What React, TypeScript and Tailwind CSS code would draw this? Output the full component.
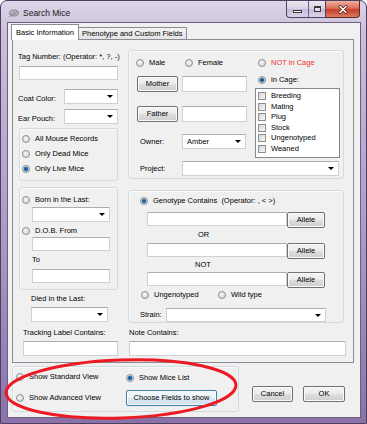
import React from 'react';

type RadioProps = { checked?: boolean; label: string; className?: string; red?: boolean };

const Radio = ({ checked, label, className = 'h-[12px]', red }: RadioProps) => (
  <div className={`flex items-center ${className}`}>
    <span className="w-[8px] h-[8px] shrink-0 rounded-full border border-[#8e8f8f] bg-[radial-gradient(circle_at_40%_40%,#f7f7f7,#cdcdcd)] flex items-center justify-center">
      {checked && <span className="w-[4px] h-[4px] rounded-full bg-[#1a5a9c] shadow-[0_0_0_0.5px_#6fb6e6]" />}
    </span>
    <span className={`ml-[5px] whitespace-pre leading-[10px] ${red ? 'text-[#f0302c]' : ''}`}>{label}</span>
  </div>
);

const Check = ({ label }: { label: string }) => (
  <div className="flex items-center h-[10.5px]">
    <span className="w-[8px] h-[8px] shrink-0 border border-[#8f8f8f] bg-gradient-to-br from-[#d6d6d6] to-[#f8f8f8]" />
    <span className="ml-[5px] leading-[10px]">{label}</span>
  </div>
);

const TextBox = ({ className = '' }: { className?: string }) => (
  <div className={`bg-white border border-[#cdd0d5] border-t-[#abadb3] ${className}`} />
);

const Combo = ({ className = '', value = '' }: { className?: string; value?: string }) => (
  <div
    className={`bg-white border border-[#cdd0d5] border-t-[#abadb3] flex items-center justify-between pl-[4px] pr-[4px] ${className}`}
  >
    <span className="leading-[10px]">{value}</span>
    <span className="w-0 h-0 border-x-[3px] border-x-transparent border-t-[3px] border-t-black" />
  </div>
);

const Btn = ({ label, className = '', focus }: { label: string; className?: string; focus?: boolean }) => (
  <div
    className={`h-[16px] rounded-[2px] border flex items-center justify-center leading-[10px] shadow-[inset_0_0_0_1px_#fbfbfb] ${
      focus
        ? 'border-[#3c7fb1] bg-[linear-gradient(#f4f9fc_0%,#eaf3f9_50%,#dbe9f3_51%,#cfe1ee_100%)]'
        : 'border-[#707070] bg-[linear-gradient(#f2f2f2_0%,#ebebeb_50%,#dddddd_51%,#cfcfcf_100%)]'
    } ${className}`}
  >
    {label}
  </div>
);

const Group = ({ className = '', children }: { className?: string; children?: React.ReactNode }) => (
  <div className={`border border-[#d2dbe1] rounded-[3px] shadow-[inset_1px_1px_0_#fafafa] ${className}`}>{children}</div>
);

const App = () => {
  return (
    <div className="relative w-[367px] h-[424px] overflow-hidden rounded-t-[7px] border border-[#4d3f60] bg-[linear-gradient(180deg,#ddd5e7_0%,#cbbedb_8%,#ad99c6_55%,#8a72a9_100%)] font-['Liberation_Sans',Arial,sans-serif] text-[7.5px] text-black">
      {/* title bar */}
      <div className="flex items-start h-[21px]">
        <svg className="ml-[7px] mt-[7px]" width="11" height="10" viewBox="0 0 11 10">
          <ellipse cx="6" cy="5" rx="4.5" ry="3" fill="#b9b4bd" stroke="#7d7784" strokeWidth="0.8" />
          <path d="M1 9 L5 5 M3 8.5 L7 4 M6 7 L9.5 3" stroke="#8a8590" strokeWidth="0.8" />
        </svg>
        <span className="ml-[4px] mt-[7px] text-[8.5px] leading-[10px] text-[#1a1a1a]">Search Mice</span>
        <div className="ml-auto mr-[6px] flex h-[17px]">
          <div className="flex w-[40px] border border-t-0 border-[#4f4163] rounded-bl-[4px] overflow-hidden bg-[linear-gradient(#ece7f2_0%,#d9d0e4_50%,#c6b8d8_51%,#dcd2e8_100%)]">
            <div className="w-[22px] border-r border-[#6e5f84] flex items-center justify-center">
              <span className="mt-[5px] w-[9px] h-[3px] bg-white border border-[#3a3a3a]" />
            </div>
            <div className="flex-1 flex items-center justify-center">
              <span className="w-[7px] h-[6px] border border-[#3a3a3a] border-t-2 bg-white/40" />
            </div>
          </div>
          <div className="w-[34px] border border-t-0 border-l-0 border-[#5e2b22] rounded-br-[4px] bg-[linear-gradient(#eeb1a3_0%,#dc6d55_45%,#c6402a_55%,#dc7b60_100%)] flex items-center justify-center">
            <svg width="10" height="9" viewBox="0 0 10 9">
              <path d="M2 1.5 L8 7.5 M8 1.5 L2 7.5" stroke="#4a2018" strokeWidth="3" strokeLinecap="round" />
              <path d="M2 1.5 L8 7.5 M8 1.5 L2 7.5" stroke="#ffffff" strokeWidth="1.6" strokeLinecap="round" />
            </svg>
          </div>
        </div>
      </div>

      {/* client area */}
      <div className="ml-[6px] w-[354px] h-[396px] border border-[#6c5f7f] bg-[#f0f0f0] flex flex-col">
        {/* tabs */}
        <div className="mt-[1px] h-[16px] flex items-end pl-[3px]">
          <div className="relative z-10 w-[68px] h-[16px] border border-b-0 border-[#898c95] bg-white pl-[4px] pt-[3px] leading-[10px]">
            Basic Information
          </div>
          <div className="w-[108px] h-[13px] border border-l-0 border-b-0 border-[#898c95] bg-[linear-gradient(#f3f3f3,#e2e2e2)] pl-[3px] pt-[1px] leading-[10px]">
            Phenotype and Custom Fields
          </div>
        </div>

        {/* tab page */}
        <div className="-mt-px ml-[4px] w-[342px] h-[324px] border border-[#898c95] bg-[#f0f0f0] pl-[6px] flex flex-col">
          <div className="flex items-start">
            {/* left column */}
            <div className="w-[99px] flex flex-col">
              <div className="mt-[12px] h-[10px] leading-[10px] whitespace-pre -ml-px">Tag Number: (Operator: *, ?, -)</div>
              <TextBox className="mt-[4px] w-full h-[14px]" />
              <div className="mt-[9px] flex items-end h-[15px]">
                <span className="flex-1 leading-[10px] -ml-px">Coat Color:</span>
                <Combo className="w-[54px] h-[15px]" />
              </div>
              <div className="mt-[5px] flex items-end h-[15px]">
                <span className="flex-1 leading-[10px] -ml-px">Ear Pouch:</span>
                <Combo className="w-[54px] h-[15px]" />
              </div>
              <Group className="mt-[4px] h-[53px] w-full pt-[2px] pl-[2px]">
                <Radio label="All Mouse Records" className="h-[15px]" />
                <Radio label="Only Dead Mice" className="h-[15px]" />
                <Radio label="Only Live Mice" checked className="h-[15px]" />
              </Group>
              <Group className="mt-[6px] h-[103px] w-full pt-[6px] pl-[2px] flex flex-col">
                <Radio label="Born in the Last:" />
                <Combo className="mt-[1px] ml-[10px] w-[78px] h-[15px]" />
                <Radio label="D.O.B. From" className="mt-[3px] h-[12px]" />
                <TextBox className="ml-[10px] w-[78px] h-[14px]" />
                <div className="ml-[10px] mt-[4px] h-[10px] leading-[10px]">To</div>
                <TextBox className="mt-[4px] ml-[10px] w-[78px] h-[14px]" />
              </Group>
              <div className="mt-[4px] ml-[12px] h-[10px] leading-[10px]">Died in the Last:</div>
              <Combo className="mt-[3px] ml-[12px] w-[77px] h-[15px]" />
            </div>

            {/* right column */}
            <div className="ml-[10px] w-[216px] flex flex-col">
              <Group className="mt-[10px] h-[129px] w-full flex flex-col">
                <div className="flex items-start">
                  <div className="w-[122px] flex flex-col">
                    <div className="mt-[6px] h-[12px] flex items-center pl-[7px]">
                      <Radio label="Male" className="h-[12px] w-[49px]" />
                      <Radio label="Female" />
                    </div>
                    <div className="mt-[7px] h-[16px] flex">
                      <Btn label="Mother" className="ml-[8px] w-[41px]" />
                      <TextBox className="ml-[4px] w-[65px] h-[16px]" />
                    </div>
                    <div className="mt-[14px] h-[16px] flex">
                      <Btn label="Father" className="ml-[8px] w-[41px]" />
                      <TextBox className="ml-[4px] w-[65px] h-[16px]" />
                    </div>
                    <div className="mt-[12px] h-[15px] flex items-center">
                      <span className="ml-[11px] w-[42px] leading-[10px]">Owner:</span>
                      <Combo value="Amber" className="w-[64px] h-[15px]" />
                    </div>
                  </div>
                  <div className="ml-[4px] w-[85px] flex flex-col">
                    <Radio label="NOT in Cage" red className="mt-[6px] h-[12px] pl-[3px]" />
                    <Radio label="in Cage:" checked className="mt-[5px] h-[12px] pl-[3px]" />
                    <div className="mt-[2px] h-[70px] w-full bg-white border border-[#828790] pl-[2px] pt-[2px]">
                      <Check label="Breeding" />
                      <Check label="Mating" />
                      <Check label="Plug" />
                      <Check label="Stock" />
                      <Check label="Ungenotyped" />
                      <Check label="Weaned" />
                    </div>
                  </div>
                </div>
                <div className="mt-[3px] h-[15px] flex items-center">
                  <span className="ml-[11px] w-[42px] leading-[10px]">Project:</span>
                  <Combo className="w-[157px] h-[15px]" />
                </div>
              </Group>

              <Group className="mt-[11px] h-[133px] w-full flex flex-col">
                <Radio label={'Genotype Contains  (Operator: , < >)'} checked className="mt-[4px] h-[12px] pl-[11px]" />
                <div className="mt-[5px] flex">
                  <TextBox className="ml-[18px] w-[140px] h-[14px]" />
                  <Btn label="Allele" className="w-[38px] h-[14px]" />
                </div>
                <div className="mt-[2px] ml-[69px] h-[10px] leading-[10px]">OR</div>
                <div className="mt-[3px] flex">
                  <TextBox className="ml-[18px] w-[140px] h-[14px]" />
                  <Btn label="Allele" className="w-[38px] h-[14px]" />
                </div>
                <div className="mt-[1px] ml-[66px] h-[10px] leading-[10px]">NOT</div>
                <div className="mt-[2px] flex">
                  <TextBox className="ml-[18px] w-[140px] h-[14px]" />
                  <Btn label="Allele" className="w-[38px] h-[14px]" />
                </div>
                <div className="mt-[1px] h-[12px] flex items-center pl-[12px]">
                  <Radio label="Ungenotyped" className="h-[12px] w-[77px]" />
                  <Radio label="Wild type" />
                </div>
                <div className="mt-[7px] h-[14px] flex items-center">
                  <span className="ml-[11px] w-[26px] leading-[10px]">Strain:</span>
                  <Combo className="w-[160px] h-[14px]" />
                </div>
              </Group>
            </div>
          </div>

          {/* bottom row of page */}
          <div className="mt-[5px] flex items-start">
            <div className="w-[99px] pl-[4px] flex flex-col">
              <div className="h-[10px] leading-[10px] whitespace-pre">Tracking Label Contains:</div>
              <TextBox className="mt-[3px] w-[95px] h-[15px]" />
            </div>
            <div className="ml-[10px] pl-[1px] flex flex-col">
              <div className="h-[10px] leading-[10px]">Note Contains:</div>
              <TextBox className="mt-[3px] w-[217px] h-[15px]" />
            </div>
          </div>
        </div>

        {/* bottom area */}
        <div className="mt-[3px] ml-[4px] flex items-start">
          <Group className="w-[227px] h-[46px] flex">
            <div className="w-[113px] pl-[3px] pt-[4px] flex flex-col">
              <Radio label="Show Standard View" />
              <Radio label="Show Advanced View" className="mt-[9px] h-[12px]" />
            </div>
            <div className="pt-[5px] flex flex-col">
              <Radio label="Show Mice List" checked />
              <Btn label="Choose Fields to show" focus className="mt-[6px] w-[91px]" />
            </div>
          </Group>
          <Btn label="Cancel" className="ml-[13px] mt-[20px] w-[41px]" />
          <Btn label="OK" className="ml-[10px] mt-[20px] w-[42px]" />
        </div>
      </div>

      {/* red annotation ellipse */}
      <svg className="absolute left-0 top-0 pointer-events-none" width="367" height="424">
        <ellipse
          cx="120"
          cy="388"
          rx="115"
          ry="29"
          fill="none"
          stroke="#ec1b23"
          strokeWidth="3"
          transform="rotate(-2 120 388)"
        />
      </svg>
    </div>
  );
};

export default App;
